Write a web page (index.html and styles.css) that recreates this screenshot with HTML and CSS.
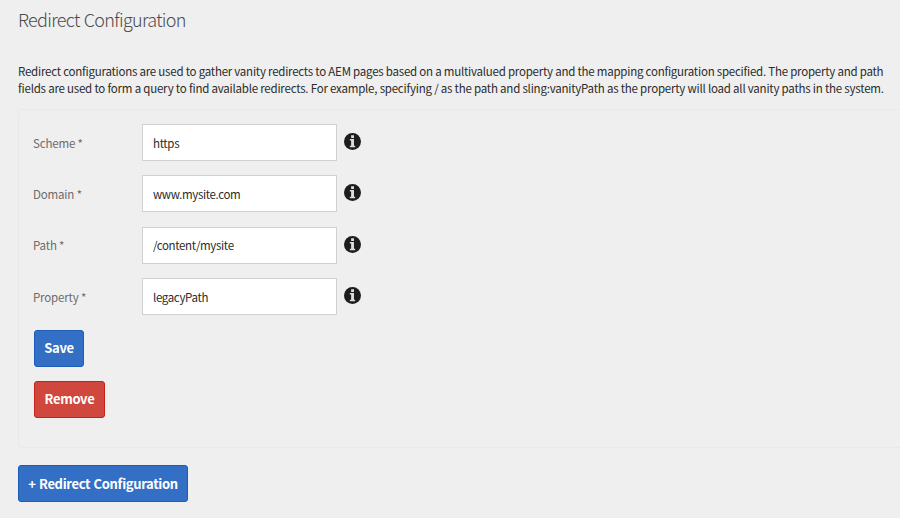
FILE: index.html
```html
<!DOCTYPE html>
<html lang="en">
<head>
<meta charset="utf-8">
<title>Redirect Configuration</title>
<link rel="stylesheet" href="styles.css">
</head>
<body>
<svg width="0" height="0" class="symbols"><symbol id="info" viewBox="0 0 16 16"><circle cx="8" cy="8" r="8"/><path class="mark" d="M6.7 2.2h2.7v2.4H6.7zM5.5 5.6h3.9v6.4h1.1v1.5h-5V12h1.2V7.1H5.5z"/></symbol></svg>
<main class="page">
  <h1 class="title">Redirect Configuration</h1>
  <p class="intro"><span class="lead">Redirect configurations are used to gather vanity redirects to AEM pages based on a multivalued property and the mapping configuration specified. The property and path</span><br><span class="rest">fields are used to form a query to find available redirects. For example, specifying / as the path and sling:vanityPath as the property will load all vanity paths in the system.</span></p>
  <form class="panel">
    <div class="row"><label class="label" for="scheme">Scheme *</label><input class="field" id="scheme" value="https"><svg class="info"><use href="#info"/></svg></div>
    <div class="row"><label class="label" for="domain">Domain *</label><input class="field" id="domain" value="www.mysite.com"><svg class="info"><use href="#info"/></svg></div>
    <div class="row"><label class="label" for="path">Path *</label><input class="field" id="path" value="/content/mysite"><svg class="info"><use href="#info"/></svg></div>
    <div class="row"><label class="label" for="property">Property *</label><input class="field" id="property" value="legacyPath"><svg class="info"><use href="#info"/></svg></div>
    <button class="btn save" type="button">Save</button>
    <button class="btn remove" type="button">Remove</button>
  </form>
  <button class="btn add" type="button">+ Redirect Configuration</button>
</main>
</body>
</html>
```
FILE: styles.css
```css
* { box-sizing: border-box; }
body { margin: 0; width: 900px; height: 518px; overflow: hidden; background: #efefef; color: #333; font-family: "Noto Sans CJK JP", "Noto Sans", sans-serif; }
.symbols { display: block; height: 0; }
.page { display: flex; flex-direction: column; align-items: flex-start; padding: 7px 0 0 18px; }
.title { margin: 0; font-size: 18px; line-height: 24px; font-weight: 300; letter-spacing: -0.68px; word-spacing: 0.8px; color: #4b4b4b; white-space: nowrap; }
.intro { margin: 32px 0 0; font-size: 11.5px; line-height: 16.5px; letter-spacing: -0.23px; color: #2b2b2b; white-space: nowrap; }
.rest { letter-spacing: -0.214px; }
.panel { width: 882px; height: 339px; margin-top: 13px; padding: 14px 15px; border: 1px solid #e9e9e9; border-right: 0; border-radius: 4px 0 0 4px; display: flex; flex-direction: column; align-items: flex-start; }
.row { display: flex; align-items: center; height: 37px; margin-bottom: 14.4px; }
.label { width: 109px; margin-left: -1px; font-size: 11.5px; letter-spacing: -0.16px; color: #6b6b6b; }
.field { width: 195px; height: 37px; padding: 0 10px; border: 1px solid #d0d0d0; background: #fff; color: #2b2b2b; font: 11.5px "Noto Sans CJK JP", "Noto Sans", sans-serif; letter-spacing: -0.35px; }
.info { width: 17px; height: 17px; margin: -2px 0 0 7px; fill: #1d1d1d; }
.mark { fill: #ddd; }
.btn { height: 37px; padding: 0 0 1px; border: 1px solid #1c5bb8; border-radius: 3px; background: #346fc6; color: #fff; font: 700 13px "Noto Sans CJK JP", "Noto Sans", sans-serif; letter-spacing: -0.33px; word-spacing: 0.8px; white-space: nowrap; }
.save { width: 50px; }
.remove { width: 71px; margin-top: 14px; background: #d0473d; border-color: #c9201a; }
.add { width: 170px; margin-top: 17px; }
```
